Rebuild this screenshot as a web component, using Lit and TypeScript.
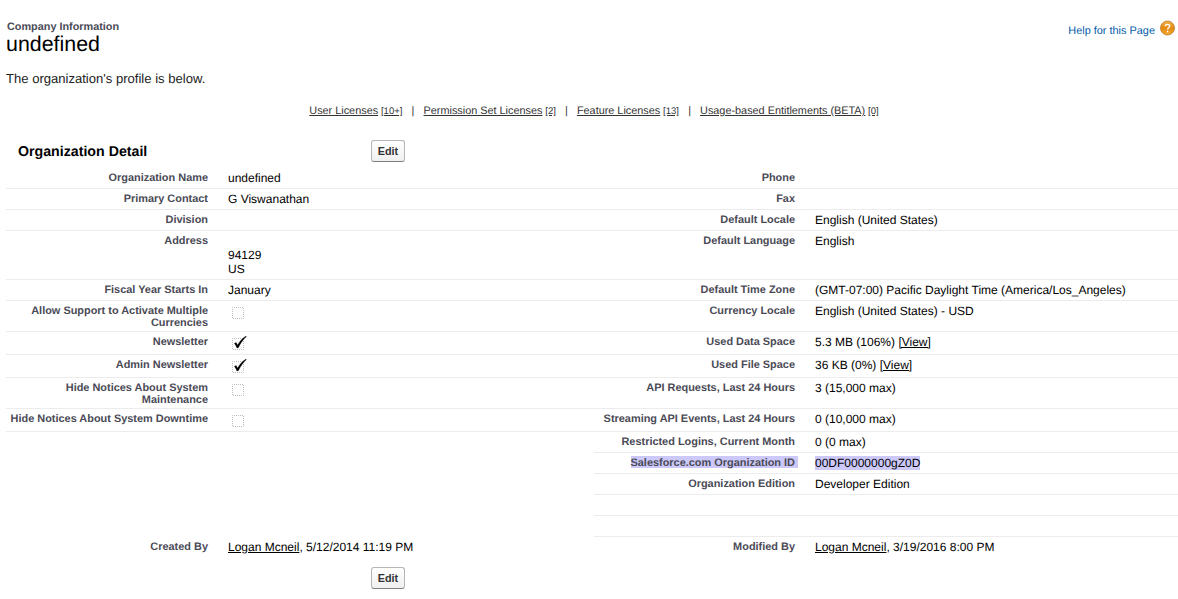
import { LitElement, html, css, nothing, TemplateResult } from "lit";
import { customElement, property } from "lit/decorators.js";
import { classMap } from "lit/directives/class-map.js";

type Value = string | TemplateResult;

interface Field {
  label: string;
  value?: Value;
  selected?: boolean;
}

interface Row {
  height: number;
  left?: Field;
  right?: Field;
  last?: boolean;
}

@customElement("check-mark")
class CheckMark extends LitElement {
  @property({ type: Boolean }) checked = false;

  static styles = css`
    :host {
      display: block;
      width: 21px;
      height: 16px;
    }
    svg {
      display: block;
    }
  `;

  render() {
    return html`<svg width="21" height="16" viewBox="0 0 21 16">
      <rect x="4.5" y="3.5" width="11" height="11" fill="none" stroke="#bdbdbd" stroke-dasharray="1 1" stroke-dashoffset="0.5" />
      ${this.checked
        ? html`<svg width="21" height="16" viewBox="0 0 21 16">
            <path d="M6.3 8.3 L8.2 7.4 L9.6 10 C11.8 6.2 14.5 3 18 1.1 L18.4 1.8 C15.4 4.3 12.6 8.1 10.4 12.8 L8.9 13.1 C8.2 11.3 7.4 9.7 6.3 8.3Z" fill="#000" stroke="#000" stroke-width="0.2" />
          </svg>`
        : nothing}
    </svg>`;
  }
}

const box = (checked: boolean) => html`<check-mark ?checked=${checked}></check-mark>`;

const ROWS: Row[] = [
  { height: 21, left: { label: "Organization Name", value: "undefined" }, right: { label: "Phone" } },
  { height: 21, left: { label: "Primary Contact", value: "G Viswanathan" }, right: { label: "Fax" } },
  { height: 21, left: { label: "Division" }, right: { label: "Default Locale", value: "English (United States)" } },
  {
    height: 49,
    left: { label: "Address", value: html`<br />94129<br />US` },
    right: { label: "Default Language", value: "English" },
  },
  {
    height: 21,
    left: { label: "Fiscal Year Starts In", value: "January" },
    right: { label: "Default Time Zone", value: "(GMT-07:00) Pacific Daylight Time (America/Los_Angeles)" },
  },
  {
    height: 31,
    left: { label: "Allow Support to Activate Multiple Currencies", value: box(false) },
    right: { label: "Currency Locale", value: "English (United States) - USD" },
  },
  {
    height: 23,
    left: { label: "Newsletter", value: box(true) },
    right: { label: "Used Data Space", value: html`5.3 MB (106%) <a>[View]</a>` },
  },
  {
    height: 23,
    left: { label: "Admin Newsletter", value: box(true) },
    right: { label: "Used File Space", value: html`36 KB (0%) <a>[View]</a>` },
  },
  {
    height: 31,
    left: { label: "Hide Notices About System Maintenance", value: box(false) },
    right: { label: "API Requests, Last 24 Hours", value: "3 (15,000 max)" },
  },
  {
    height: 23,
    left: { label: "Hide Notices About System Downtime", value: box(false) },
    right: { label: "Streaming API Events, Last 24 Hours", value: "0 (10,000 max)" },
  },
  { height: 21, right: { label: "Restricted Logins, Current Month", value: "0 (0 max)" } },
  { height: 21, right: { label: "Salesforce.com Organization ID", value: "00DF0000000gZ0D", selected: true } },
  { height: 21, right: { label: "Organization Edition", value: "Developer Edition" } },
  { height: 21 },
  { height: 21 },
  {
    height: 21,
    last: true,
    left: { label: "Created By", value: html`<a>Logan Mcneil</a>, 5/12/2014 11:19 PM` },
    right: { label: "Modified By", value: html`<a>Logan Mcneil</a>, 3/19/2016 8:00 PM` },
  },
];

const LINKS: [string, string][] = [
  ["User Licenses", "[10+]"],
  ["Permission Set Licenses", "[2]"],
  ["Feature Licenses", "[13]"],
  ["Usage-based Entitlements (BETA)", "[0]"],
];

@customElement("app-root")
class AppRoot extends LitElement {
  static styles = css`
    :host {
      display: block;
      height: 599px;
      overflow: hidden;
      background: #fff;
      color: #000;
      font: 12px/14px "Liberation Sans", Arial, sans-serif;
      text-rendering: geometricPrecision;
    }
    .head {
      box-sizing: border-box;
      display: flex;
      justify-content: space-between;
      padding: 20px 3px 0 6px;
      height: 70px;
    }
    .kind {
      margin: 0;
      padding: 1px 0 0 1px;
      font: bold 10.85px/13px "Liberation Sans", Arial, sans-serif;
      color: #4a4a56;
    }
    .name {
      margin: 0;
      font: 21.4px/20px "Liberation Sans", Arial, sans-serif;
    }
    .help {
      display: flex;
      gap: 5px;
      font-size: 10.92px;
      line-height: 22px;
      color: #015ba7;
    }
    .intro {
      padding: 1px 6px 0;
      font-size: 13.07px;
      line-height: 16px;
      color: #222;
    }
    .links {
      display: flex;
      justify-content: center;
      align-items: baseline;
      margin-top: 17px;
      padding-left: 10px;
      height: 14px;
      font-size: 10.87px;
      line-height: 14px;
      color: #333;
      white-space: pre;
    }
    .count {
      margin-left: 2.8px;
      font-size: 9.6px;
    }
    a {
      text-decoration: underline;
    }
    .bar {
      padding: 0 9.1px;
    }
    .title {
      display: grid;
      grid-template-columns: 353px auto;
      justify-content: start;
      align-items: center;
      margin-top: 22px;
      padding-left: 18px;
      height: 22px;
    }
    h3 {
      margin: 0;
      padding-top: 2px;
      font-size: 14.2px;
    }
    .edit {
      box-sizing: border-box;
      width: 34px;
      height: 22px;
      padding: 0;
      border: 1px solid #b5b5b5;
      border-bottom-color: #7f7f7f;
      border-radius: 3px;
      background: linear-gradient(#fff, #f0f0f0);
      color: #333;
      font: bold 10.8px/20px "Liberation Sans", Arial, sans-serif;
      text-align: center;
    }
    .detail {
      padding: 6px 0 0 6px;
    }
    .row {
      display: grid;
      grid-template-columns: 588px 584px;
    }
    .cell {
      box-sizing: border-box;
      display: grid;
      grid-template-columns: 202px 1fr;
      column-gap: 20px;
      border-bottom: 1px solid #ececec;
    }
    .cell.right {
      grid-template-columns: 201px 1fr;
    }
    .cell.plain {
      border-bottom-color: transparent;
    }
    .label {
      padding-top: 4px;
      font-size: 10.93px;
      font-weight: bold;
      line-height: 12px;
      text-align: right;
      color: #4a4a56;
    }
    .value {
      padding-top: 3px;
      white-space: nowrap;
    }
    .mark {
      background: #ccc9fa;
    }
    .label .mark {
      margin-right: -3px;
      padding: 1px 3px 0 0;
      background: linear-gradient(#ccc9fa, #ccc9fa) 0 0 / 100% 12px no-repeat;
    }
    .foot {
      padding: 9px 0 0 371px;
    }
  `;

  private cell(side: "left" | "right", row: Row) {
    const field = row[side];
    const plain = !!row.last || (side === "left" && !field);
    const mark = classMap({ mark: !!field?.selected });
    return html`<div class=${classMap({ cell: true, right: side === "right", plain })}>
      <div class="label">${field ? html`<span class=${mark}>${field.label}</span>` : nothing}</div>
      <div class="value">${field?.value ? (field.selected ? html`<span class=${mark}>${field.value}</span>` : field.value) : nothing}</div>
    </div>`;
  }

  render() {
    return html`
      <header class="head">
        <div>
          <h1 class="kind">Company Information</h1>
          <h2 class="name">undefined</h2>
        </div>
        <div class="help">
          <span>Help for this Page</span>
          <svg width="15" height="16" viewBox="0 0 15 16">
            <defs>
              <linearGradient id="orb" x1="0" y1="0" x2="0" y2="1">
                <stop offset="0" stop-color="#f3b24c" />
                <stop offset="0.5" stop-color="#e58a12" />
                <stop offset="1" stop-color="#f2ac30" />
              </linearGradient>
            </defs>
            <circle cx="7.5" cy="8" r="7" fill="url(#orb)" stroke="#b9772a" stroke-width="0.8" />
            <path d="M5.3 6.3 C5.4 3.7 9.8 3.8 9.7 6.3 C9.6 7.8 7.6 7.8 7.6 9.5 M7.6 10.7 V12.2" fill="none" stroke="#fff" stroke-width="1.4" />
          </svg>
        </div>
      </header>
      <div class="intro">The organization's profile is below.</div>
      <nav class="links">${LINKS.map(
        ([name, count], i) => html`${i ? html`<span class="bar">|</span>` : nothing}<a>${name}</a><a class="count">${count}</a>`
      )}</nav>
      <div class="title">
        <h3>Organization Detail</h3>
        <button class="edit">Edit</button>
      </div>
      <section class="detail">
        ${ROWS.map(
          (row) => html`<div class="row" style="height:${row.height}px">${this.cell("left", row)}${this.cell("right", row)}</div>`
        )}
      </section>
      <div class="foot"><button class="edit">Edit</button></div>
    `;
  }
}
